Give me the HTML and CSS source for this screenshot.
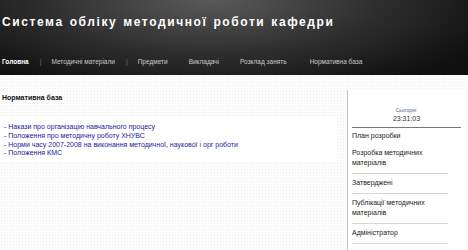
FILE: index.html
```html
<!DOCTYPE html>
<html lang="uk">
<head>
  <meta charset="UTF-8"/>
  <title>Система обліку методичної роботи кафедри</title>
  <link rel="stylesheet" href="styles.css">
</head>
<body>
  <div class="header">
    <h1>Система обліку методичної роботи кафедри</h1>
    <ul class="nav">
      <li class="active">Головна</li>
      <li class="sep">|</li>
      <li>Методичні матеріали</li>
      <li class="sep">|</li>
      <li>Предмети</li>
      <li>Викладачі</li>
      <li>Розклад занять</li>
      <li>Нормативна база</li>
    </ul>
  </div>

  <div class="page">
    <div class="main">
      <h2>Нормативна база</h2>
      <div class="docs">
        <div>- <a href="#">Накази про організацію навчального процесу</a></div>
        <div>- <a href="#">Положення про методичну роботу ХНУВС</a></div>
        <div>- <a href="#">Норми часу 2007-2008 на виконання методичної, наукової і орг роботи</a></div>
        <div>- <a href="#">Положення КМС</a></div>
      </div>
    </div>

    <div class="sidebar">
      <div class="clock">
        <div class="today">Сьогодні:</div>
        <div class="time">23:31:03</div>
      </div>
      <ul class="menu">
        <li>План розробки</li>
        <li>Розробка методичних матеріалів</li>
        <li>Затверджені</li>
        <li>Публікації методичних матеріалів</li>
        <li>Адміністратор</li>
      </ul>
    </div>
  </div>
</body>
</html>
```

FILE: styles.css
```css
* { box-sizing: border-box; }
html, body { margin: 0; padding: 0; }
body {
  font-family: 'Liberation Sans', Arial, sans-serif;
  background-color: #fcfcfc;
  background-image: radial-gradient(#efefef 0.6px, transparent 0.8px);
  background-size: 3px 3px;
  height: 250px;
  overflow: hidden;
}

/* шапка */
.header {
  height: 75px;
  background: radial-gradient(ellipse 65% 130% at 45% 0%, #5a5a5a 0%, #2e2e2e 55%, #101010 100%);
  padding: 13px 0 0 2px;
}
.header h1 {
  margin: 0;
  color: #fff;
  font-size: 12px;
  font-weight: bold;
  letter-spacing: 1.6px;
  word-spacing: 1px;
  line-height: 18px;
}
.nav {
  list-style: none;
  margin: 27px 0 0 0;
  padding: 0;
  display: flex;
  font-size: 6.5px;
  color: #c8c8c8;
}
.nav li { margin-right: 21px; }
.nav li.sep { margin-right: 10px; margin-left: -10px; color: #777; }
.nav li.active { color: #fff; font-weight: bold; }
.nav li:nth-child(7) { margin-right: 23px; }

/* основна частина */
.page { display: flex; }
.main { width: 337px; padding-top: 19px; }
.main h2 {
  margin: 0 0 15px 2px;
  font-size: 7px;
  font-weight: bold;
  color: #111;
}
.docs {
  background: #fff;
  padding: 7px 4px 6px 4px;
  font-size: 7px;
  line-height: 8.8px;
  color: #111;
  height: 45px;
}
.docs a { color: #1a1a9a; text-decoration: none; }

.sidebar {
  margin: 15px 3px 0 10px;
  flex: 1;
  background: #fff;
  border-left: 1px solid #c9c9c9;
  height: 160px;
  padding: 0 4px 0 4px;
}
.clock {
  text-align: center;
  padding-top: 17px;
  padding-bottom: 3px;
  border-bottom: 1px solid #777;
  color: #333;
}
.clock .today { font-size: 5px; color: #5a6a90; line-height: 7px; }
.clock .time { font-size: 7px; line-height: 10px; }
.menu {
  list-style: none;
  margin: 0;
  padding: 0;
  width: 96px;
  font-size: 7px;
  color: #222;
}
.menu li {
  padding: 4px 0 5px 0;
  line-height: 10px;
  border-bottom: 1px solid #d6d6d6;
}
.menu li:first-child { border-bottom: none; padding: 3px 0 3px 0; }
```
